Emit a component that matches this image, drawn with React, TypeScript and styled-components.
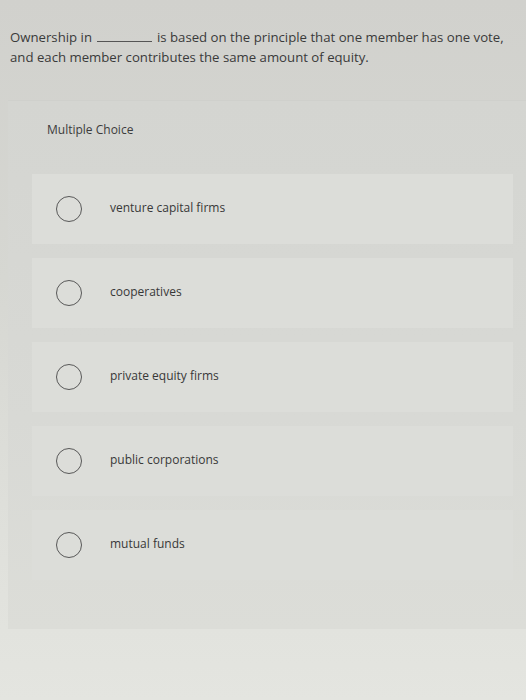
import React from "react";
import styled, { createGlobalStyle } from "styled-components";

const Global = createGlobalStyle`
  html, body { margin: 0; padding: 0; }
  body {
    width: 526px;
    min-height: 700px;
    background: linear-gradient(180deg, #d1d1cd 0%, #d6d7d2 40%, #e0e1dc 80%, #e4e5e0 100%);
    font-family: "Open Sans", "Liberation Sans", sans-serif;
    color: #3a3a3a;
  }
`;

const Page = styled.div`
  width: 526px;
  min-height: 700px;
  display: flex;
  flex-direction: column;
`;

const Question = styled.p`
  margin: 0;
  padding: 27px 10px 0 10px;
  font-size: 13.2px;
  line-height: 20px;
  color: #3a3a3a;
`;

const Blank = styled.span`
  display: inline-block;
  width: 55px;
  height: 1px;
  margin: 0 5px;
  background: #555;
  vertical-align: baseline;
`;

const Panel = styled.section`
  margin: 33px 0 0 8px;
  padding: 22px 13px 49px 24px;
  background: linear-gradient(180deg, #d4d5d1 0%, #d8d9d5 60%, #dcddd8 100%);
  border-top: 1px solid #cfd0cc;
  display: flex;
  flex-direction: column;
`;

const Label = styled.div`
  padding-left: 15px;
  font-size: 12px;
  line-height: 14px;
  color: #3c3c3c;
  margin-bottom: 37px;
`;

const Options = styled.div`
  display: flex;
  flex-direction: column;
  gap: 14px;
`;

const Row = styled.div`
  height: 70px;
  display: flex;
  align-items: center;
  padding-left: 24px;
  gap: 28px;
  background: #dcddd9;
`;

const Radio = styled.span`
  width: 24px;
  height: 24px;
  border: 1.3px solid #585858;
  border-radius: 50%;
  flex: none;
`;

const OptionText = styled.span`
  font-size: 12px;
  color: #383838;
  margin-top: -3px;
`;

const options = [
  "venture capital firms",
  "cooperatives",
  "private equity firms",
  "public corporations",
  "mutual funds",
];

export default function App() {
  return (
    <Page>
      <Global />
      <Question>
        {"Ownership in"}
        <Blank />
        {"is based on the principle that one member has one vote,"}
        <br />
        {"and each member contributes the same amount of equity."}
      </Question>
      <Panel>
        <Label>Multiple Choice</Label>
        <Options>
          {options.map((o) => (
            <Row key={o}>
              <Radio />
              <OptionText>{o}</OptionText>
            </Row>
          ))}
        </Options>
      </Panel>
    </Page>
  );
}
